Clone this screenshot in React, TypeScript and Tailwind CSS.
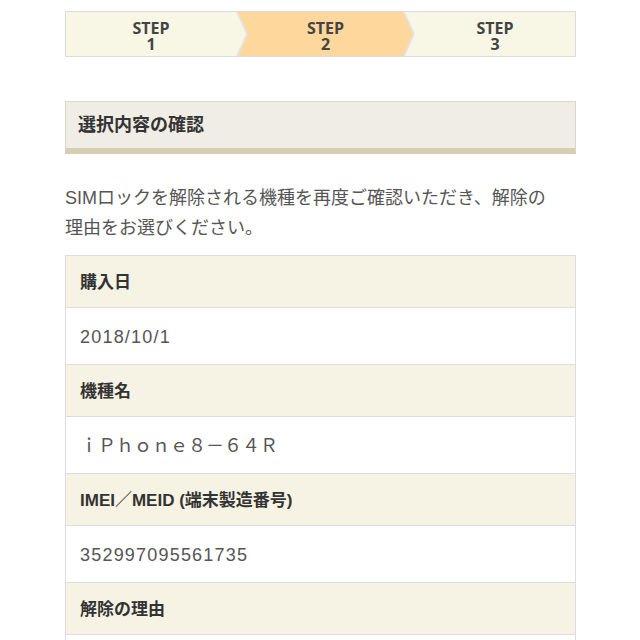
import React from 'react';

const steps = [
  { label: '1', active: false, first: true, last: false },
  { label: '2', active: true, first: false, last: false },
  { label: '3', active: false, first: false, last: true },
];

const rows = [
  { head: '購入日', value: '2018/10/1', wide: false },
  { head: '機種名', value: 'ｉＰｈｏｎｅ８－６４Ｒ', wide: true },
  { head: 'IMEI／MEID (端末製造番号)', value: '352997095561735', wide: false },
  { head: '解除の理由', value: '', wide: false },
];

export default function App() {
  return (
    <div className="min-h-[640px] w-[640px] bg-white font-['Liberation_Sans','Noto_Sans_CJK_JP',sans-serif] text-[#555]">
      <div className="ml-[65px] w-[511px] pt-[11px]">
        {/* Step bar */}
        <div className="flex h-[46px] border border-[#dcdcdc] bg-[#e4e4e4]">
          {steps.map((s) => (
            <div
              key={s.label}
              className={[
                'flex flex-col items-center justify-center pt-[3px] font-["Open_Sans",sans-serif] text-[16px] font-bold leading-[16px] text-[#444]',
                s.active ? 'bg-[#fed79c]' : 'bg-[#f8f6e5]',
                s.first
                  ? 'w-[180px] shrink-0 pr-[10px] [clip-path:polygon(0_0,calc(100%_-_10px)_0,100%_50%,calc(100%_-_10px)_100%,0_100%)]'
                  : s.last
                  ? '-ml-[8px] flex-1 pl-[10px] [clip-path:polygon(0_0,100%_0,100%_100%,0_100%,10px_50%)]'
                  : '-ml-[8px] w-[175px] shrink-0 px-[10px] [clip-path:polygon(0_0,calc(100%_-_10px)_0,100%_50%,calc(100%_-_10px)_100%,0_100%,10px_50%)]',
              ].join(' ')}
            >
              <span>STEP</span>
              <span>{s.label}</span>
            </div>
          ))}
        </div>

        {/* Section title */}
        <div className="mt-[44px] flex h-[53px] items-center border border-[#dcd7c6] border-b-[6px] border-b-[#d6ceb2] bg-[#f0ede6] pl-[12px]">
          <h2 className="text-[18px] font-bold text-[#333]">選択内容の確認</h2>
        </div>

        <p className="mt-[29px] text-[18px] leading-[30px] text-[#555]">
          SIMロックを解除される機種を再度ご確認いただき、解除の
          <br />
          理由をお選びください。
        </p>

        {/* Details table */}
        <div className="mt-[12px] border-x border-t border-[#dddddd]">
          {rows.map((r) => (
            <div key={r.head}>
              <div className="flex h-[52px] items-center border-b border-[#dddddd] bg-[#f6f3e4] pl-[14px] pt-[3px] text-[17px] font-bold text-[#333]">
                {r.head}
              </div>
              <div
                className={[
                  'flex h-[57px] items-center border-b border-[#dddddd] bg-white pl-[14px] pt-[3px] text-[18px] text-[#555]',
                  r.wide ? '' : 'tracking-[1.2px]',
                ].join(' ')}
              >
                {r.value}
              </div>
            </div>
          ))}
        </div>
      </div>
    </div>
  );
}
